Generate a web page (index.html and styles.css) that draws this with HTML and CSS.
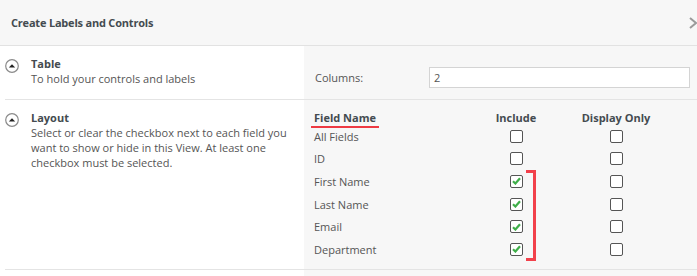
FILE: index.html
```html
<!DOCTYPE html>
<html>
<head>
<meta charset="utf-8">
<link rel="stylesheet" href="styles.css">
</head>
<body>
<div class="dialog">
  <div class="header">
    <h1 class="title">Create Labels and Controls</h1>
    <span class="close">
      <svg width="10" height="12" viewBox="0 0 10 12"><path d="M1 1 L7 6 L1 11" fill="none" stroke="#9a9a9a" stroke-width="2"/></svg>
    </span>
  </div>

  <div class="section">
    <div class="left">
      <span class="toggle"><svg width="14" height="14" viewBox="0 0 14 14"><circle cx="7" cy="7" r="6.3" fill="#fff" stroke="#8a8a8a" stroke-width="1.2"/><path d="M3.8 8.6 L7 5.2 L10.2 8.6 Z" fill="#222"/></svg></span>
      <div class="info">
        <div class="heading">Table</div>
        <div class="desc">To hold your controls and labels</div>
      </div>
    </div>
    <div class="right table-right">
      <label class="col-label">Columns:</label>
      <div class="input">2</div>
    </div>
  </div>

  <div class="section">
    <div class="left">
      <span class="toggle"><svg width="14" height="14" viewBox="0 0 14 14"><circle cx="7" cy="7" r="6.3" fill="#fff" stroke="#8a8a8a" stroke-width="1.2"/><path d="M3.8 8.6 L7 5.2 L10.2 8.6 Z" fill="#222"/></svg></span>
      <div class="info">
        <div class="heading">Layout</div>
        <div class="desc">Select or clear the checkbox next to each field you want to show or hide in this View. At least one checkbox must be selected.</div>
      </div>
    </div>
    <div class="right layout-right">
      <div class="grid">
        <div class="th th-name"><span class="underlined">Field Name</span></div>
        <div class="th center">Include</div>
        <div class="th center">Display Only</div>

        <div class="td">All Fields</div>
        <div class="td center"><span class="cb"></span></div>
        <div class="td center"><span class="cb"></span></div>

        <div class="td">ID</div>
        <div class="td center"><span class="cb"></span></div>
        <div class="td center"><span class="cb"></span></div>

        <div class="td">First Name</div>
        <div class="td center"><span class="cb checked"><svg width="9" height="8" viewBox="0 0 9 8"><path d="M1 4.2 L3.4 6.5 L8 1.2" fill="none" stroke="#3fae49" stroke-width="2.2"/></svg></span></div>
        <div class="td center"><span class="cb"></span></div>

        <div class="td">Last Name</div>
        <div class="td center"><span class="cb checked"><svg width="9" height="8" viewBox="0 0 9 8"><path d="M1 4.2 L3.4 6.5 L8 1.2" fill="none" stroke="#3fae49" stroke-width="2.2"/></svg></span></div>
        <div class="td center"><span class="cb"></span></div>

        <div class="td">Email</div>
        <div class="td center"><span class="cb checked"><svg width="9" height="8" viewBox="0 0 9 8"><path d="M1 4.2 L3.4 6.5 L8 1.2" fill="none" stroke="#3fae49" stroke-width="2.2"/></svg></span></div>
        <div class="td center"><span class="cb"></span></div>

        <div class="td">Department</div>
        <div class="td center"><span class="cb checked"><svg width="9" height="8" viewBox="0 0 9 8"><path d="M1 4.2 L3.4 6.5 L8 1.2" fill="none" stroke="#3fae49" stroke-width="2.2"/></svg></span></div>
        <div class="td center"><span class="cb"></span></div>
      </div>
      <div class="bracket"></div>
    </div>
  </div>

  <div class="section last">
    <div class="left"></div>
    <div class="right"></div>
  </div>
</div>
</body>
</html>
```

FILE: styles.css
```css
html, body {
  margin: 0;
  padding: 0;
  background: #fff;
  overflow: hidden;
}
body {
  font-family: "Open Sans", "Noto Sans", sans-serif;
  font-size: 11px;
  color: #555;
  width: 697px;
  height: 276px;
}
.dialog {
  width: 697px;
}
.header {
  background: #f7f7f7;
  border-bottom: 1px solid #e2e2e2;
  display: flex;
  align-items: center;
  justify-content: space-between;
  padding-left: 11px;
  box-sizing: border-box;
  height: 46px;
}
.title {
  margin: 0;
  font-size: 11px;
  font-weight: 700;
  color: #444b50;
  letter-spacing: -0.2px;
}
.close {
  display: flex;
  margin-right: -2px;
  margin-top: 1px;
}
.section {
  display: grid;
  grid-template-columns: 299px 1fr;
  margin-left: 5px;
  border-bottom: 1px solid #e4e4e4;
}
.left {
  display: flex;
  align-items: flex-start;
  gap: 12px;
}
.toggle {
  display: flex;
  margin-top: 13px;
}
.info {
  padding-top: 10px;
}
.heading {
  font-weight: 700;
  color: #444b50;
  line-height: 15px;
}
.desc {
  line-height: 15px;
  padding-right: 10px;
}
.right {
  background: #f7f7f7;
}
.table-right {
  display: flex;
  align-items: center;
  height: 53px;
  padding: 10px 7px 0 11px;
  box-sizing: border-box;
}
.col-label {
  width: 114px;
}
.input {
  flex: 1;
  height: 21px;
  box-sizing: border-box;
  background: #fff;
  border: 1px solid #d4d4d4;
  padding: 2px 4px;
  line-height: 15px;
  color: #555;
}
.layout-right {
  position: relative;
  padding: 9px 0 10px 10px;
  height: 169px;
  box-sizing: border-box;
}
.grid {
  display: grid;
  grid-template-columns: 150px 104px 96px;
  grid-template-rows: 16px;
  grid-auto-rows: 22.6px;
}
.th {
  font-weight: 700;
  color: #444b50;
  line-height: 17px;
}
.th-name {
  margin-left: -3px;
}
.underlined {
  display: inline-block;
  padding: 0 3px;
  border-bottom: 2px solid #ee3a43;
  line-height: 16px;
}
.center {
  display: flex;
  justify-content: center;
  align-items: center;
}
.th.center {
  align-items: flex-start;
}
.td {
  display: flex;
  align-items: center;
}
.cb {
  width: 13px;
  height: 13px;
  box-sizing: border-box;
  border: 1px solid #555;
  border-radius: 2px;
  background: #fff;
  display: flex;
  align-items: center;
  justify-content: center;
}
.bracket {
  position: absolute;
  left: 222px;
  top: 70px;
  width: 7px;
  height: 85px;
  border: 3px solid #f2414b;
  border-left: none;
}
.last {
  height: 20px;
  border-bottom: none;
}
```
